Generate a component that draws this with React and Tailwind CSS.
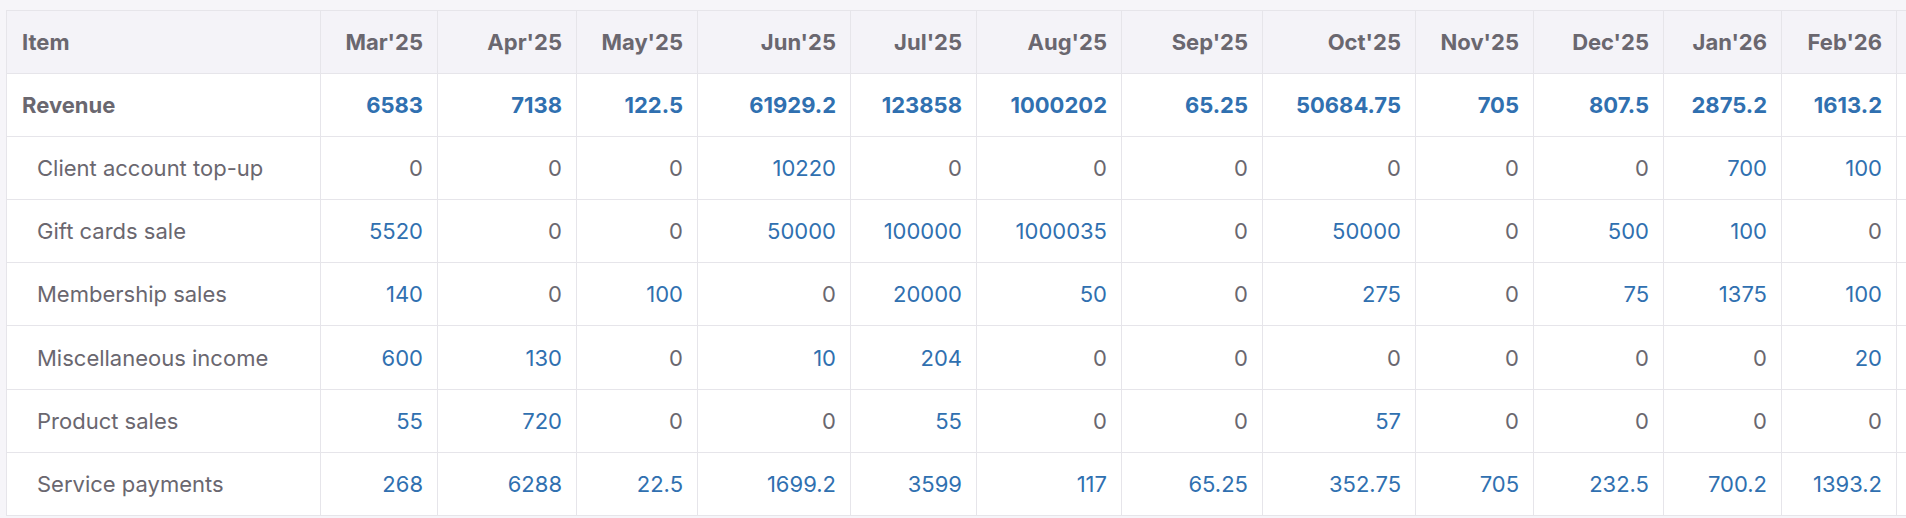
import React from 'react';

const months = ["Mar'25", "Apr'25", "May'25", "Jun'25", "Jul'25", "Aug'25", "Sep'25", "Oct'25", "Nov'25", "Dec'25", "Jan'26", "Feb'26"];
// column widths taken from the grid lines
const widths = [314, 117, 139, 121, 153, 126, 145, 141, 153, 118, 130, 118, 115];

const total = { label: 'Revenue', values: [6583, 7138, 122.5, 61929.2, 123858, 1000202, 65.25, 50684.75, 705, 807.5, 2875.2, 1613.2] };

const rows = [
  { label: 'Client account top-up', values: [0, 0, 0, 10220, 0, 0, 0, 0, 0, 0, 700, 100] },
  { label: 'Gift cards sale', values: [5520, 0, 0, 50000, 100000, 1000035, 0, 50000, 0, 500, 100, 0] },
  { label: 'Membership sales', values: [140, 0, 100, 0, 20000, 50, 0, 275, 0, 75, 1375, 100] },
  { label: 'Miscellaneous income', values: [600, 130, 0, 10, 204, 0, 0, 0, 0, 0, 0, 20] },
  { label: 'Product sales', values: [55, 720, 0, 0, 55, 0, 0, 57, 0, 0, 0, 0] },
  { label: 'Service payments', values: [268, 6288, 22.5, 1699.2, 3599, 117, 65.25, 352.75, 705, 232.5, 700.2, 1393.2] },
];

const cell = 'border border-[#e6e5ea] h-[63.2px] pr-[14px] text-right';

export default function App() {
  return (
    <div
      className="w-[1906px] h-[518px] overflow-hidden bg-[#f6f5f9] pl-[6px] pt-[9.5px] text-[#6a676f]"
      style={{ fontFamily: 'Inter, "Noto Sans", sans-serif' }}
    >
      <table className="table-fixed border-collapse text-[22px] leading-none" style={{ width: 1990 }}>
        <colgroup>
          {widths.map((w, i) => (
            <col key={i} style={{ width: w }} />
          ))}
          <col style={{ width: 100 }} />
        </colgroup>
        <thead>
          <tr className="bg-[#f4f3f8]">
            <th className="border border-[#e6e5ea] h-[63.2px] pl-[15px] text-left font-bold">Item</th>
            {months.map((m) => (
              <th key={m} className={cell + ' font-bold'}>{m}</th>
            ))}
            <th className="border border-[#e6e5ea]"></th>
          </tr>
        </thead>
        <tbody className="bg-white">
          <tr className="font-bold">
            <td className="border border-[#e6e5ea] h-[63.2px] pl-[15px]">{total.label}</td>
            {total.values.map((v, i) => (
              <td key={i} className={cell + ' text-[#3070b0]'}>{v}</td>
            ))}
            <td className="border border-[#e6e5ea]"></td>
          </tr>
          {rows.map((r) => (
            <tr key={r.label}>
              <td className="border border-[#e6e5ea] h-[63.2px] pl-[30px]">{r.label}</td>
              {r.values.map((v, i) => (
                <td key={i} className={cell + (v === 0 ? '' : ' text-[#3070b0]')}>{v}</td>
              ))}
              <td className="border border-[#e6e5ea]"></td>
            </tr>
          ))}
        </tbody>
      </table>
    </div>
  );
}
